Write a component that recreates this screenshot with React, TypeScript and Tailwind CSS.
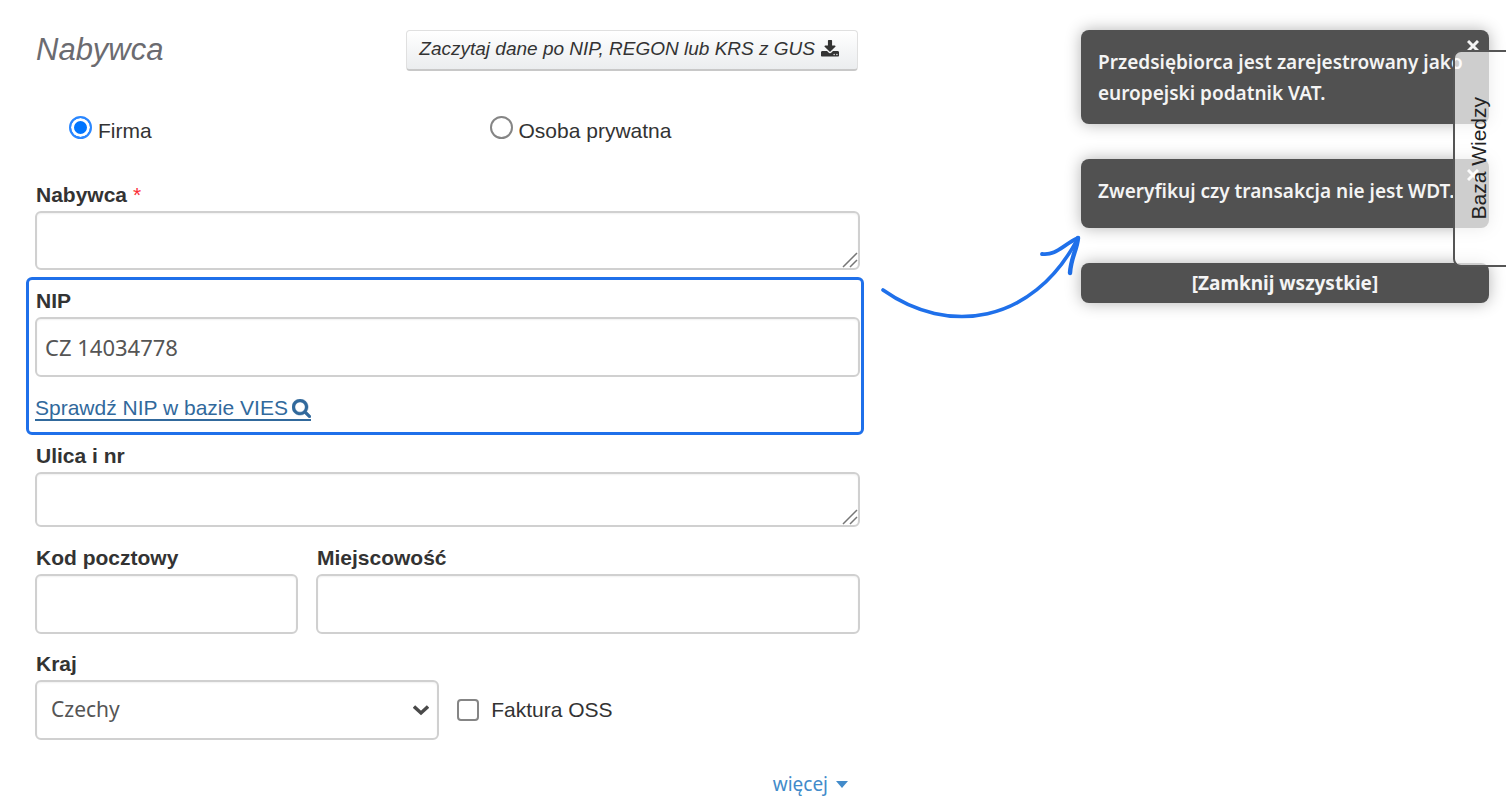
import type { ReactNode } from "react";

const labelClass = "block pl-px text-[21px] leading-6 font-bold text-[#333]";
const fieldClass =
  "block w-full rounded-md border-2 border-[#d0d0d0] bg-white px-2 font-['Noto_Sans',sans-serif] text-[#555] shadow-[inset_0_1px_2px_rgba(0,0,0,0.06)] outline-none";

function DownloadIcon() {
  return (
    <svg className="h-[18px] w-[18px]" viewBox="64 0 1664 1664" fill="currentColor">
      <path d="M1344 1344q0-26-19-45t-45-19-45 19-19 45 19 45 45 19 45-19 19-45zm256 0q0-26-19-45t-45-19-45 19-19 45 19 45 45 19 45-19 19-45zm128-224v320q0 40-28 68t-68 28H160q-40 0-68-28t-28-68v-320q0-40 28-68t68-28h465l135 136q58 56 136 56t136-56l136-136h464q40 0 68 28t28 68zm-325-569q17 41-14 70l-448 448q-18 19-45 19t-45-19L403 621q-31-29-14-70 17-39 59-39h256V64q0-26 19-45t45-19h256q26 0 45 19t19 45v448h256q42 0 59 39z" />
    </svg>
  );
}

function SearchIcon() {
  return (
    <svg className="h-[19px] w-[19px]" viewBox="0 128 1664 1664" fill="currentColor" stroke="currentColor" strokeWidth="40">
      <path d="M1152 832q0-185-131.5-316.5T704 384 387.5 515.5 256 832t131.5 316.5T704 1280t316.5-131.5T1152 832zm512 832q0 52-38 90t-90 38q-54 0-90-38l-343-342q-179 124-399 124-143 0-273.5-55.5t-225-150-150-225T0 832t55.5-273.5 150-225 225-150T704 128t273.5 55.5 225 150 150 225T1408 832q0 220-124 399l343 343q37 37 37 90z" />
    </svg>
  );
}

function AreaField({ id, label, className }: { id: string; label: ReactNode; className: string }) {
  return (
    <div>
      <label htmlFor={id} className={labelClass}>{label}</label>
      <div className="relative mt-1">
        <textarea id={id} className={`${fieldClass} ${className} resize-none text-[21px]`} />
        <svg className="pointer-events-none absolute right-0.5 bottom-0.5 h-4 w-4" viewBox="0 0 16 16" stroke="#777" strokeWidth="1.5">
          <path d="M1 15 15 1M8 15l7-7" />
        </svg>
      </div>
    </div>
  );
}

function TextField({ id, label, value = "" }: { id: string; label: string; value?: string }) {
  return (
    <div>
      <label htmlFor={id} className={labelClass}>{label}</label>
      <input id={id} type="text" defaultValue={value} className={`${fieldClass} mt-1 h-[60px] text-[22px]`} />
    </div>
  );
}

function Radio({ label, checked = false }: { label: string; checked?: boolean }) {
  return (
    <label className="flex items-center gap-1.5 text-[21px] leading-6 text-[#333]">
      <input
        type="radio"
        name="buyer-type"
        defaultChecked={checked}
        className="mb-1.5 h-[23px] w-[23px] appearance-none rounded-full border-2 border-[#858585] bg-white checked:border-[#2b87ff] checked:bg-[#0075ff] checked:shadow-[inset_0_0_0_3px_white]"
      />
      {label}
    </label>
  );
}

const toastClass = "rounded-lg bg-[#515151] text-[#f4f4f4] shadow-[0_0_16px_rgba(0,0,0,0.3)]";

function Toast({ children }: { children: ReactNode }) {
  return (
    <div role="alert" className={`${toastClass} relative min-h-[69px] pt-[17px] pr-4 pb-[15px] pl-[17px] text-[19px] leading-[31px] font-semibold`}>
      {children}
      <button type="button" aria-label="Zamknij" className="absolute top-2.5 right-2.5 flex h-3 w-3 items-center justify-center">
        <svg className="h-3 w-3" viewBox="0 0 12 12" stroke="currentColor" strokeWidth="3">
          <path d="M1 1l10 10M11 1 1 11" />
        </svg>
      </button>
    </div>
  );
}

export default function App() {
  return (
    <main className="relative flex items-start overflow-hidden bg-white pt-[30px] pr-[17px] pb-3 pl-[26px] font-['Liberation_Sans',Arial,sans-serif]">
      <form className="min-w-0 flex-1">
        <div className="flex items-start justify-between pr-1.5 pl-2.5">
          <h1 className="text-[31px] leading-10 text-[#6b6b70] italic">Nabywca</h1>
          <button
            type="button"
            className="flex h-[41px] items-center gap-1.5 rounded border border-b-2 border-[#e0e0e0] border-b-[#c8c8c8] bg-linear-to-b from-white to-[#ebedef] pr-[18px] pb-0.5 pl-3 text-[19px] text-[#333] italic"
          >
            Zaczytaj dane po NIP, REGON lub KRS z GUS
            <DownloadIcon />
          </button>
        </div>

        <div className="mt-[45px] grid grid-cols-2 pl-[43px]">
          <Radio label="Firma" checked />
          <div className="pl-[23px]">
            <Radio label="Osoba prywatna" />
          </div>
        </div>

        <div className="mt-[38px] pr-1 pl-[9px]">
          <AreaField id="buyer" label={<>Nabywca <span className="font-normal text-red-500">*</span></>} className="h-[59px]" />
        </div>

        <div className="mt-[7px] rounded-md border-3 border-[#1f70ea] pt-[9px] pr-px pb-2.5 pl-1.5">
          <TextField id="nip" label="NIP" value="CZ 14034778" />
          <a href="#vies" className="mt-5 inline-flex h-6 items-center gap-1 border-b-2 border-[#31699c] text-[21px] leading-6 text-[#31699c]">
            Sprawdź NIP w bazie VIES
            <SearchIcon />
          </a>
        </div>

        <div className="pt-[9px] pr-1 pl-[9px]">
          <AreaField id="street" label="Ulica i nr" className="h-[55px]" />
          <div className="mt-[19px] grid grid-cols-[263fr_544fr] gap-[18px]">
            <TextField id="postcode" label="Kod pocztowy" />
            <TextField id="city" label="Miejscowość" />
          </div>
          <div className="mt-[18px]">
            <label htmlFor="country" className={labelClass}>Kraj</label>
            <div className="mt-1 flex items-center gap-[18px]">
              <div className="relative w-[49%]">
                <select id="country" defaultValue="cz" className={`${fieldClass} h-[60px] appearance-none pl-3.5 text-[21px]`}>
                  <option value="cz">Czechy</option>
                </select>
                <svg className="pointer-events-none absolute top-6 right-2.5 h-3 w-4" viewBox="0 0 16 12" fill="none" stroke="#4a4a4a" strokeWidth="3.4">
                  <path d="M1 2.5 8 9l7-6.5" />
                </svg>
              </div>
              <label className="flex items-center gap-3 text-[21px] text-[#333]">
                <input type="checkbox" className="h-[22px] w-[22px] appearance-none rounded border-2 border-[#858585] bg-white" />
                Faktura OSS
              </label>
            </div>
          </div>
          <div className="mt-[30px] flex justify-end pr-3">
            <button type="button" className="flex items-center gap-2 font-['Noto_Sans',sans-serif] text-[19px] text-[#428bca]">
              więcej
              <svg className="h-[7px] w-3" viewBox="0 0 12 7" fill="currentColor"><path d="M0 0h12L6 7z" /></svg>
            </button>
          </div>
        </div>
      </form>

      <svg className="mt-[200px] h-[92px] w-[217px] shrink-0" viewBox="864 230 217 92" fill="none" stroke="#1f70ea" strokeLinecap="round" strokeLinejoin="round">
        <path d="M883 290C948 336 1032 324 1077 240" strokeWidth="3.6" />
        <path d="M1042 254C1056 256 1064 244 1078 238" strokeWidth="3.8" />
        <path d="M1078 238C1077 250 1071 257 1070 273" strokeWidth="4.4" />
      </svg>

      <aside className="flex w-[408px] shrink-0 flex-col gap-[35px] font-['Noto_Sans',sans-serif]">
        <Toast>Przedsiębiorca jest zarejestrowany jako europejski podatnik VAT.</Toast>
        <Toast>Zweryfikuj czy transakcja nie jest WDT.</Toast>
        <button type="button" className={`${toastClass} h-10 text-[19px] font-bold`}>[Zamknij wszystkie]</button>
      </aside>

      <a
        href="#wiedza"
        className="absolute top-[50px] right-0 flex h-[217px] w-[53px] items-center justify-center rounded-l-lg border-2 border-r-0 border-[#555] bg-white/72 pr-1 text-[21px] text-[#222]"
      >
        <span className="rotate-180 [writing-mode:vertical-rl]">Baza Wiedzy</span>
      </a>
    </main>
  );
}
